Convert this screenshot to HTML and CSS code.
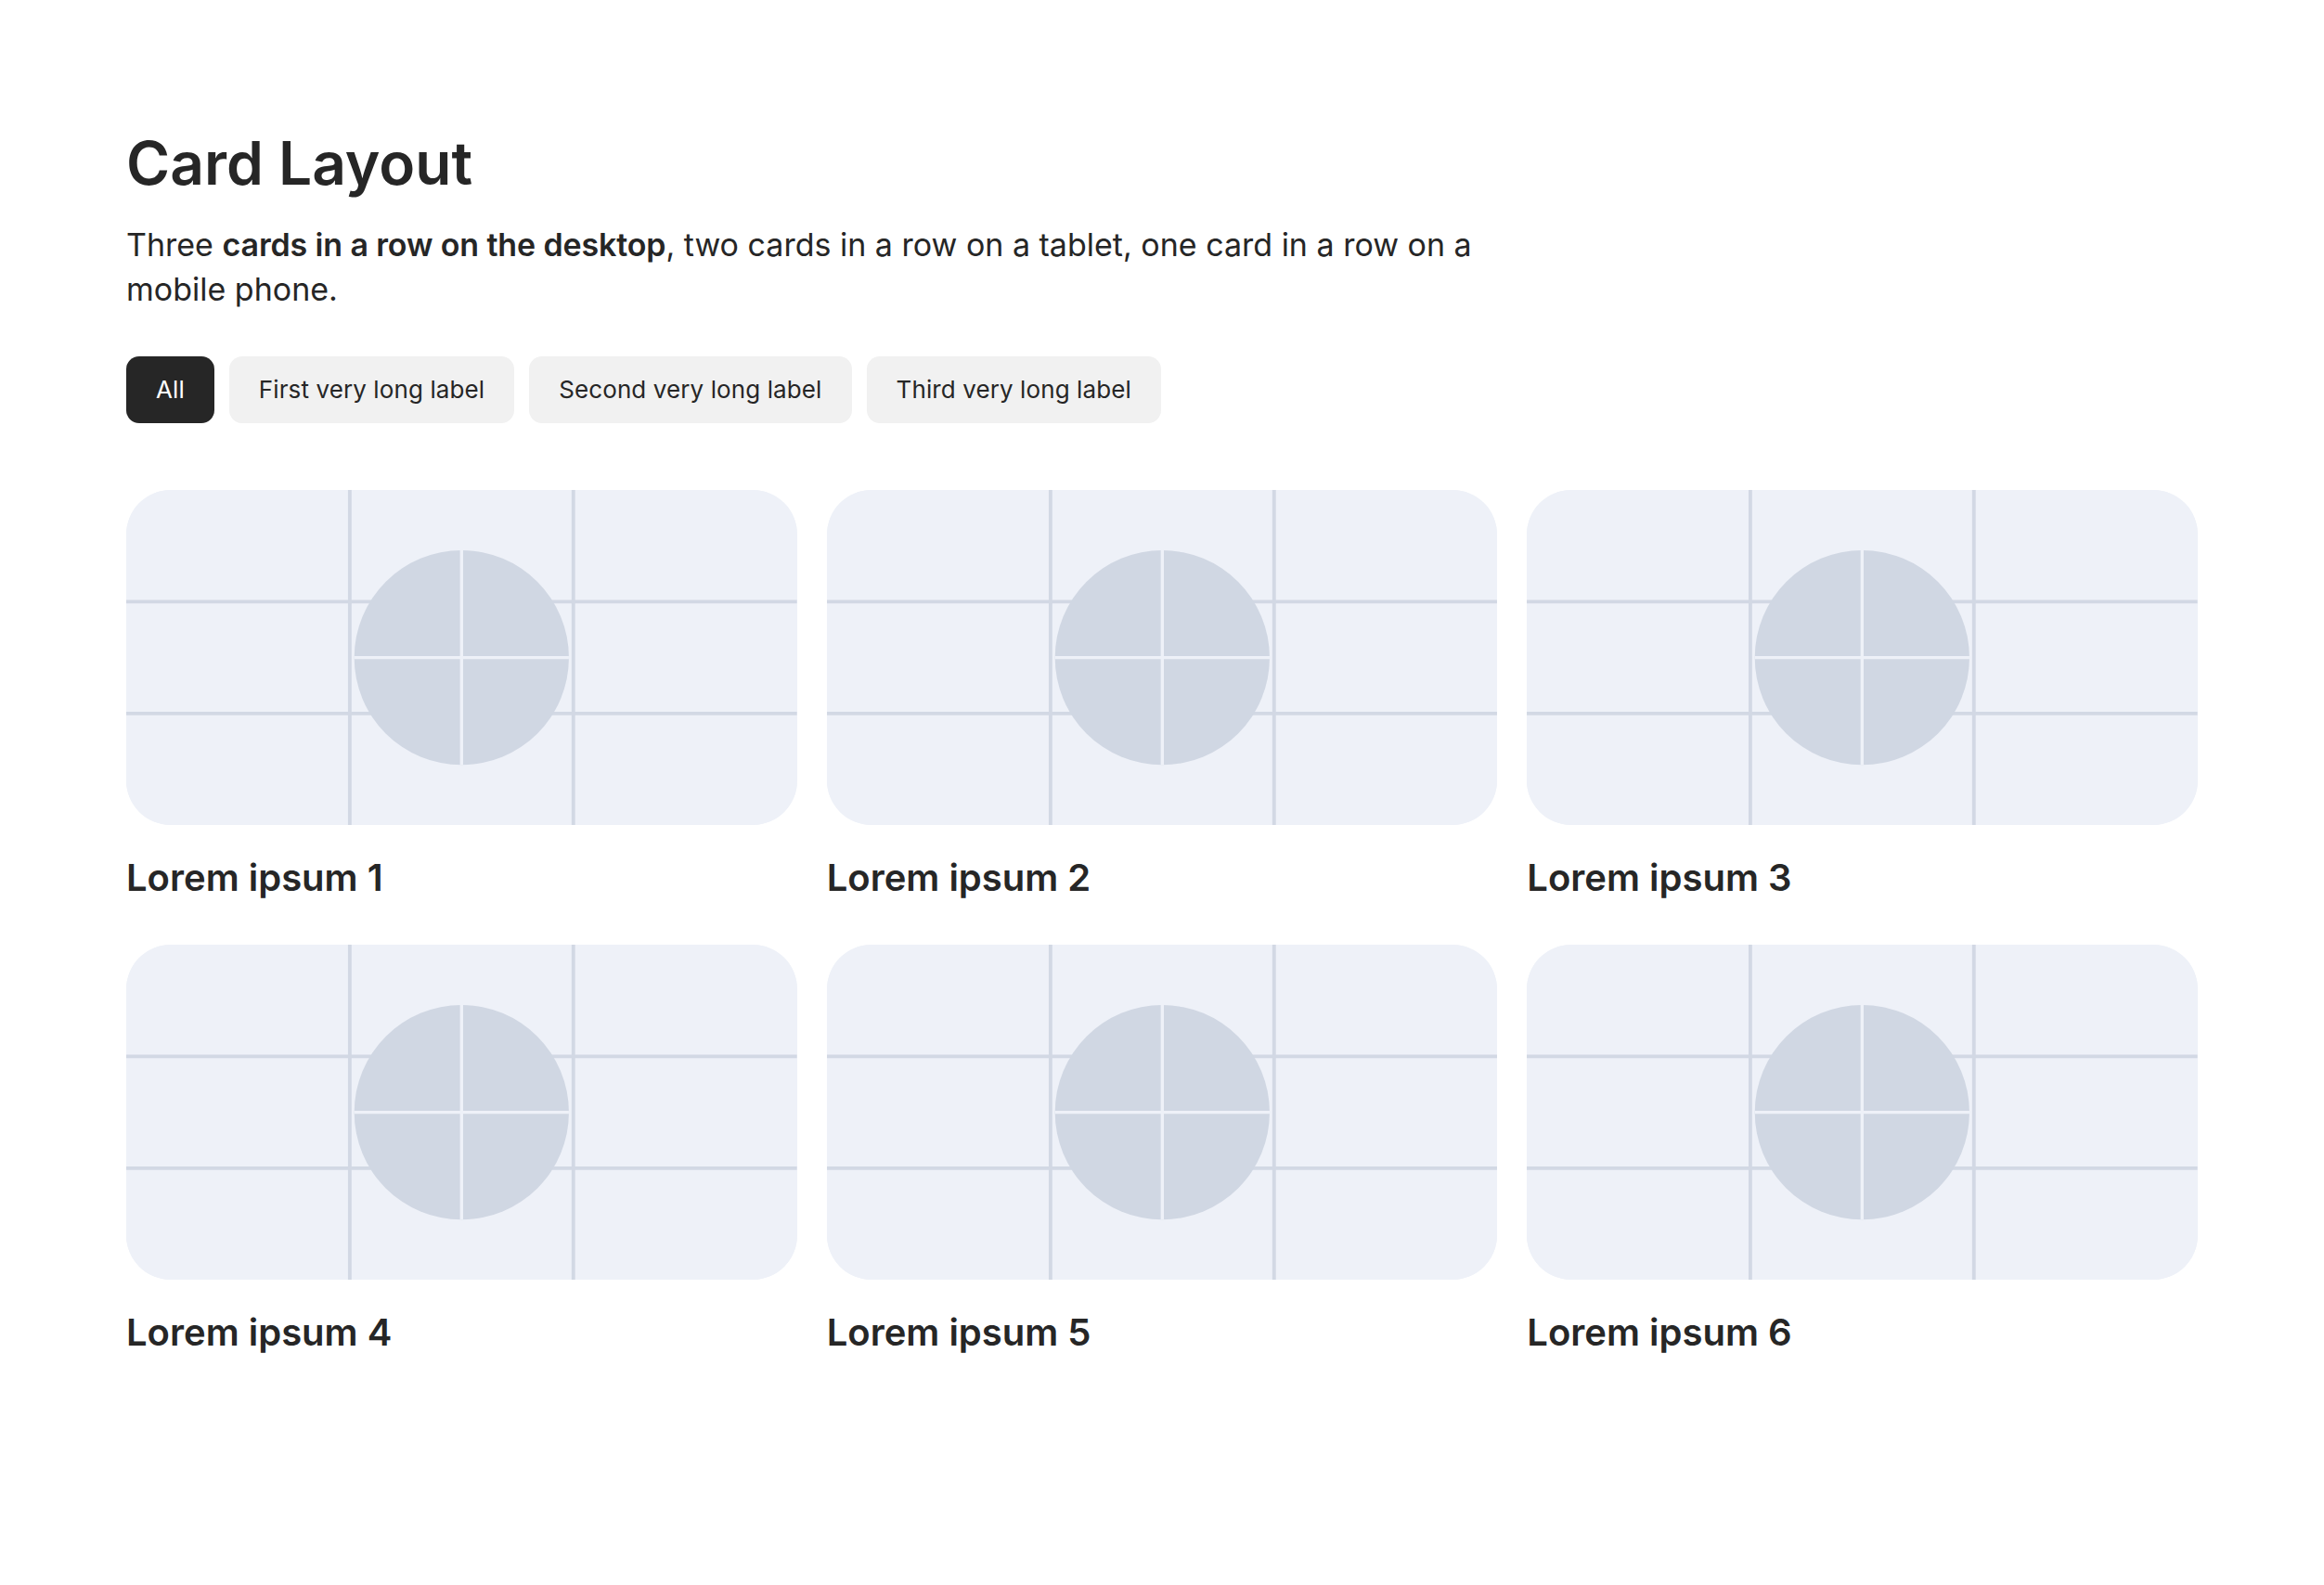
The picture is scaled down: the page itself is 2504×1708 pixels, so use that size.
FILE: index.html
```html
<!DOCTYPE html>
<html lang="en">
<head>
<meta charset="utf-8">
<title>Card Layout</title>
<link rel="stylesheet" href="styles.css">
</head>
<body>
<main class="page">
  <h1 class="title">Card Layout</h1>
  <p class="lead">Three <strong>cards in a row on the desktop</strong>, two cards in a row on a tablet, one card in a row on a mobile phone.</p>
  <div class="filters">
    <button class="chip chip-active">All</button>
    <button class="chip">First very long label</button>
    <button class="chip">Second very long label</button>
    <button class="chip">Third very long label</button>
  </div>
  <div class="grid">
    <article class="card">
      <div class="thumb"><svg viewBox="0 0 600 300" preserveAspectRatio="xMidYMid slice"><rect width="600" height="300" fill="#eef1f8"/><g stroke="#d2d8e4" stroke-width="3.2"><line x1="200" y1="0" x2="200" y2="300"/><line x1="400" y1="0" x2="400" y2="300"/><line x1="0" y1="100" x2="600" y2="100"/><line x1="0" y1="200" x2="600" y2="200"/></g><circle cx="300" cy="150" r="96" fill="#d0d7e3"/><g stroke="#eef1f8" stroke-width="2.8"><line x1="300" y1="54" x2="300" y2="246"/><line x1="204" y1="150" x2="396" y2="150"/></g></svg></div>
      <h2 class="card-title">Lorem ipsum 1</h2>
    </article>
    <article class="card">
      <div class="thumb"><svg viewBox="0 0 600 300" preserveAspectRatio="xMidYMid slice"><rect width="600" height="300" fill="#eef1f8"/><g stroke="#d2d8e4" stroke-width="3.2"><line x1="200" y1="0" x2="200" y2="300"/><line x1="400" y1="0" x2="400" y2="300"/><line x1="0" y1="100" x2="600" y2="100"/><line x1="0" y1="200" x2="600" y2="200"/></g><circle cx="300" cy="150" r="96" fill="#d0d7e3"/><g stroke="#eef1f8" stroke-width="2.8"><line x1="300" y1="54" x2="300" y2="246"/><line x1="204" y1="150" x2="396" y2="150"/></g></svg></div>
      <h2 class="card-title">Lorem ipsum 2</h2>
    </article>
    <article class="card">
      <div class="thumb"><svg viewBox="0 0 600 300" preserveAspectRatio="xMidYMid slice"><rect width="600" height="300" fill="#eef1f8"/><g stroke="#d2d8e4" stroke-width="3.2"><line x1="200" y1="0" x2="200" y2="300"/><line x1="400" y1="0" x2="400" y2="300"/><line x1="0" y1="100" x2="600" y2="100"/><line x1="0" y1="200" x2="600" y2="200"/></g><circle cx="300" cy="150" r="96" fill="#d0d7e3"/><g stroke="#eef1f8" stroke-width="2.8"><line x1="300" y1="54" x2="300" y2="246"/><line x1="204" y1="150" x2="396" y2="150"/></g></svg></div>
      <h2 class="card-title">Lorem ipsum 3</h2>
    </article>
    <article class="card">
      <div class="thumb"><svg viewBox="0 0 600 300" preserveAspectRatio="xMidYMid slice"><rect width="600" height="300" fill="#eef1f8"/><g stroke="#d2d8e4" stroke-width="3.2"><line x1="200" y1="0" x2="200" y2="300"/><line x1="400" y1="0" x2="400" y2="300"/><line x1="0" y1="100" x2="600" y2="100"/><line x1="0" y1="200" x2="600" y2="200"/></g><circle cx="300" cy="150" r="96" fill="#d0d7e3"/><g stroke="#eef1f8" stroke-width="2.8"><line x1="300" y1="54" x2="300" y2="246"/><line x1="204" y1="150" x2="396" y2="150"/></g></svg></div>
      <h2 class="card-title">Lorem ipsum 4</h2>
    </article>
    <article class="card">
      <div class="thumb"><svg viewBox="0 0 600 300" preserveAspectRatio="xMidYMid slice"><rect width="600" height="300" fill="#eef1f8"/><g stroke="#d2d8e4" stroke-width="3.2"><line x1="200" y1="0" x2="200" y2="300"/><line x1="400" y1="0" x2="400" y2="300"/><line x1="0" y1="100" x2="600" y2="100"/><line x1="0" y1="200" x2="600" y2="200"/></g><circle cx="300" cy="150" r="96" fill="#d0d7e3"/><g stroke="#eef1f8" stroke-width="2.8"><line x1="300" y1="54" x2="300" y2="246"/><line x1="204" y1="150" x2="396" y2="150"/></g></svg></div>
      <h2 class="card-title">Lorem ipsum 5</h2>
    </article>
    <article class="card">
      <div class="thumb"><svg viewBox="0 0 600 300" preserveAspectRatio="xMidYMid slice"><rect width="600" height="300" fill="#eef1f8"/><g stroke="#d2d8e4" stroke-width="3.2"><line x1="200" y1="0" x2="200" y2="300"/><line x1="400" y1="0" x2="400" y2="300"/><line x1="0" y1="100" x2="600" y2="100"/><line x1="0" y1="200" x2="600" y2="200"/></g><circle cx="300" cy="150" r="96" fill="#d0d7e3"/><g stroke="#eef1f8" stroke-width="2.8"><line x1="300" y1="54" x2="300" y2="246"/><line x1="204" y1="150" x2="396" y2="150"/></g></svg></div>
      <h2 class="card-title">Lorem ipsum 6</h2>
    </article>
  </div>
</main>
</body>
</html>
```

FILE: styles.css
```css
html, body {
  margin: 0;
  padding: 0;
  background: #ffffff;
}

body {
  font-family: Inter, "Noto Sans", "Liberation Sans", sans-serif;
  font-optical-sizing: none;
  color: #262626;
}

.page {
  padding: 138px 136px 120px;
}

.title {
  margin: 0;
  font-size: 64px;
  line-height: 1.2;
  font-weight: 600;
  letter-spacing: 0;
}

.lead {
  margin: 25px 0 0;
  max-width: 1500px;
  font-size: 34px;
  line-height: 48px;
  font-weight: 400;
  letter-spacing: 0;
}

.lead strong {
  font-weight: 600;
  letter-spacing: -0.004em;
}

.filters {
  display: flex;
  flex-wrap: wrap;
  gap: 16px;
  margin-top: 48px;
}

.chip {
  height: 72px;
  padding: 0 32px;
  border: 0;
  border-radius: 14px;
  background: #f1f1f1;
  color: #262626;
  font-family: inherit;
  font-optical-sizing: none;
  font-size: 26px;
  font-weight: 400;
  letter-spacing: 0.004em;
}

.chip-active {
  background: #262626;
  color: #ffffff;
}

.grid {
  display: grid;
  grid-template-columns: repeat(3, 1fr);
  column-gap: 32px;
  row-gap: 48px;
  margin-top: 72px;
}

.thumb {
  aspect-ratio: 2 / 1;
  border-radius: 48px;
  overflow: hidden;
  background: #eef1f8;
}

.thumb svg {
  display: block;
  width: 100%;
  height: 100%;
}

.card-title {
  margin: 33px 0 0;
  font-size: 40px;
  line-height: 48px;
  font-weight: 600;
}
```
